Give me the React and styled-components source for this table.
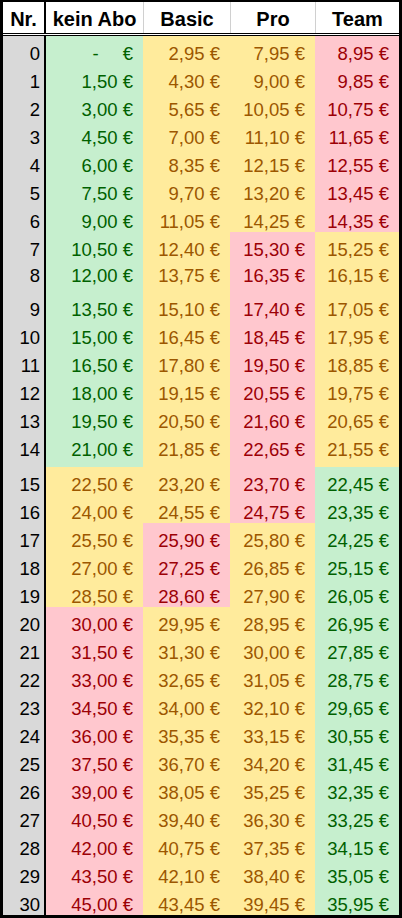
import React from 'react'
import styled, { createGlobalStyle } from 'styled-components'

const GlobalStyle = createGlobalStyle`
  html, body {
    margin: 0;
    padding: 0;
    background: #fff;
  }
  body {
    font-family: "Liberation Sans", Arial, sans-serif;
  }
`

const tones = {
  good: { bg: '#C6EFCE', fg: '#006100' },
  neutral: { bg: '#FFEB9C', fg: '#9C5700' },
  bad: { bg: '#FFC7CE', fg: '#9C0006' },
}

// price in cents = base + step * count
const plans = [
  { name: 'kein Abo', base: 0, step: 150 },
  { name: 'Basic', base: 295, step: 135 },
  { name: 'Pro', base: 795, step: 105 },
  { name: 'Team', base: 895, step: 90 },
]

// some rows in the sheet are a bit taller / shorter
const rowHeights = { 7: 26, 8: 34, 14: 35 }

const euro = (cents) => (cents / 100).toFixed(2).replace('.', ',') + ' €'

const rows = Array.from({ length: 31 }, (_, n) => {
  const prices = plans.map((p) => p.base + p.step * n)
  const min = Math.min(...prices)
  const max = Math.max(...prices)
  return {
    n,
    cells: prices.map((c) => ({
      cents: c,
      tone: c === min ? 'good' : c === max ? 'bad' : 'neutral',
    })),
  }
})

function App() {
  return (
    <>
      <GlobalStyle />
      <Sheet>
        <HeadRow>
          <HeadCell $first>Nr.</HeadCell>
          {plans.map((p, i) => (
            <HeadCell key={p.name} $sep={i > 0}>{p.name}</HeadCell>
          ))}
        </HeadRow>
        {rows.map((row) => (
          <Row key={row.n} $h={rowHeights[row.n] || 28}>
            <NrCell>{row.n}</NrCell>
            {row.cells.map((cell, i) => (
              <PriceCell key={i} $tone={cell.tone}>
                {cell.cents === 0 ? (
                  <>
                    <Dash>-</Dash>€
                  </>
                ) : (
                  euro(cell.cents)
                )}
              </PriceCell>
            ))}
          </Row>
        ))}
      </Sheet>
    </>
  )
}

export default App

const Sheet = styled.div`
  width: 402px;
  box-sizing: border-box;
  border: 3px solid #000;
  border-top-width: 2px;
`

const Row = styled.div`
  display: grid;
  grid-template-columns: 43px 97px 87px 85px 84px;
  height: ${(p) => p.$h}px;
`

const HeadRow = styled(Row).attrs({ $h: 31 })`
  border-bottom: 3px double #000;
`

const HeadCell = styled.div`
  box-sizing: border-box;
  display: flex;
  align-items: center;
  justify-content: center;
  padding-top: 3px;
  font-size: 20px;
  font-weight: 700;
  color: #000;
  background: #fff;
  border-left: ${(p) => (p.$sep ? '1px solid #d0d0d0' : 'none')};
  border-right: ${(p) => (p.$first ? '2px solid #000' : 'none')};
`

const NrCell = styled.div`
  box-sizing: border-box;
  background: #d9d9d9;
  border-right: 2px solid #000;
  text-align: right;
  padding: 8px 4px 0 0;
  font-size: 18.5px;
  line-height: 20px;
  color: #000;
`

const PriceCell = styled.div`
  box-sizing: border-box;
  background: ${(p) => tones[p.$tone].bg};
  color: ${(p) => tones[p.$tone].fg};
  text-align: right;
  padding: 8px 10px 0 0;
  font-size: 18.5px;
  line-height: 20px;
  white-space: nowrap;
`

const Dash = styled.span`
  margin-right: 24px;
`
